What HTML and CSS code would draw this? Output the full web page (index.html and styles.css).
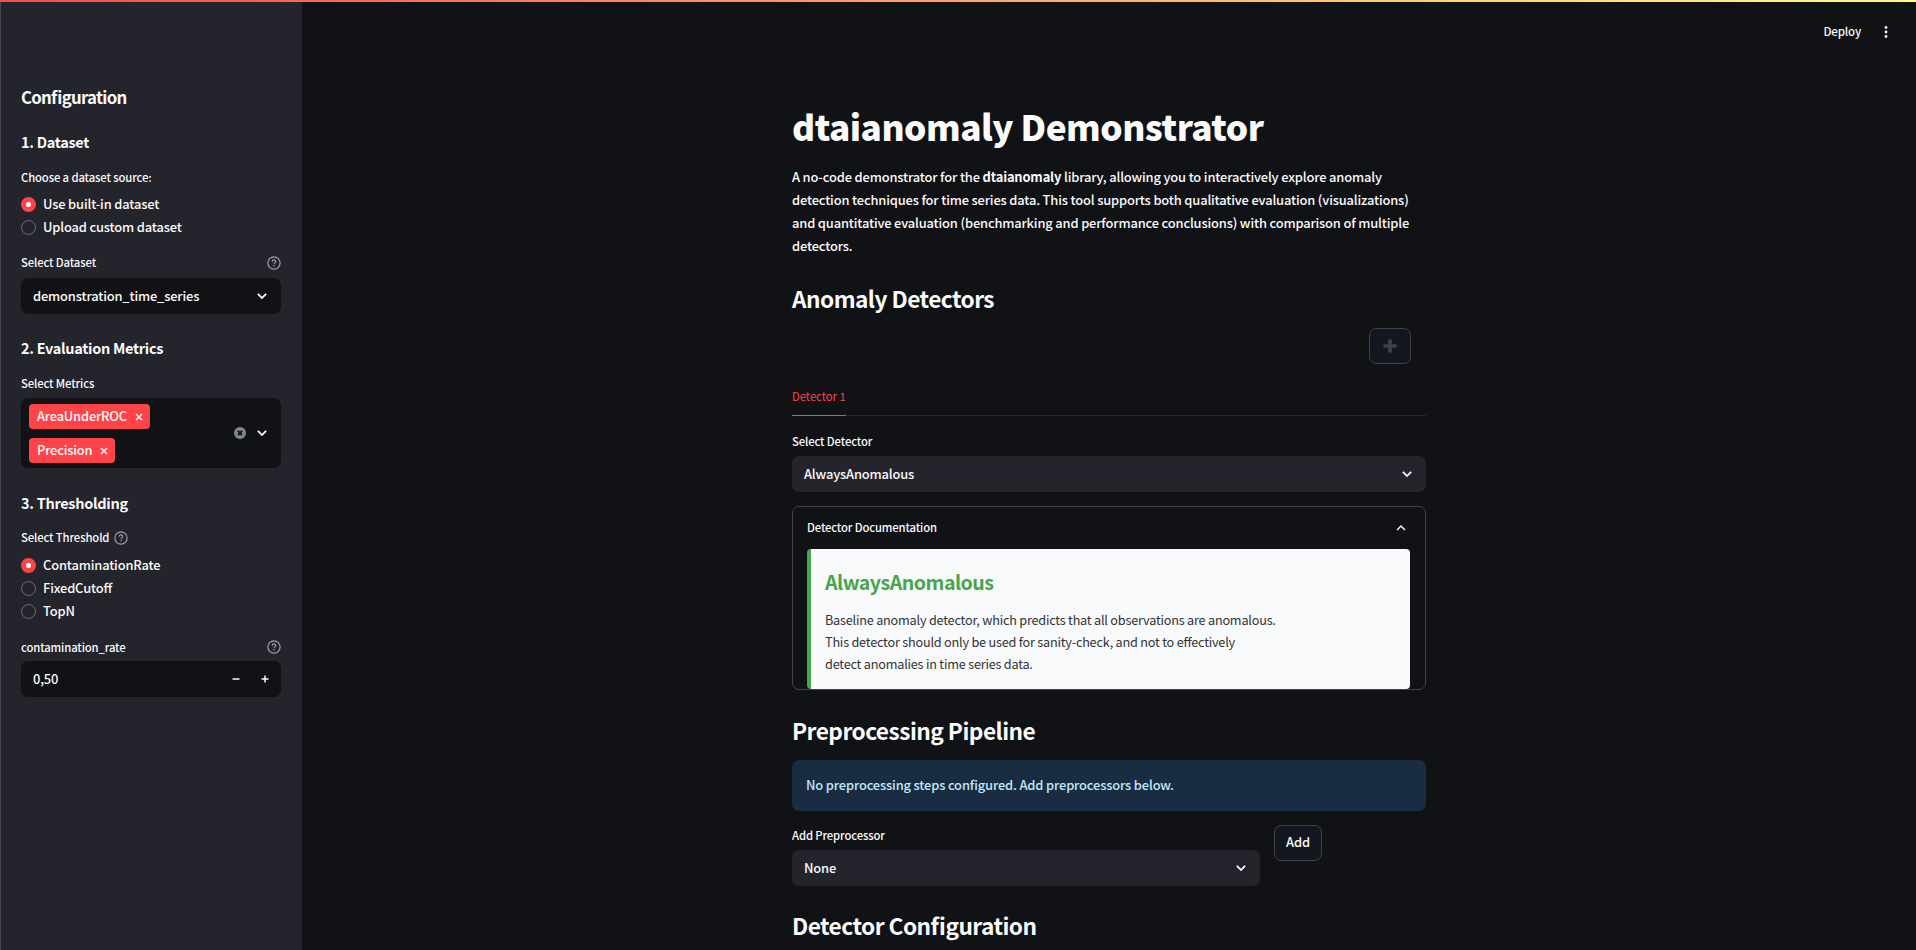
FILE: index.html
```html
<!DOCTYPE html>
<html lang="en">
<head>
<meta charset="utf-8">
<title>dtaianomaly Demonstrator</title>
<link rel="stylesheet" href="styles.css">
</head>
<body>
<svg class="defs" aria-hidden="true">
  <symbol id="down" viewBox="0 0 24 24"><path d="M16.6 8.6 12 13.2 7.4 8.6 6 10l6 6 6-6z" stroke="currentColor" stroke-width=".6"/></symbol>
  <symbol id="up" viewBox="0 0 24 24"><path d="M12 8l-6 6 1.4 1.4L12 10.8l4.6 4.6L18 14z"/></symbol>
  <symbol id="help" viewBox="0 0 24 24"><circle cx="12" cy="12" r="10.500" fill="none" stroke="currentColor" stroke-width="2"/><path d="M9 9.700a3 3 0 0 1 6 0c0 2-3 2.300-3 4.300" fill="none" stroke="currentColor" stroke-width="1.900"/><circle cx="12" cy="16.800" r="1.200"/></symbol>
  <symbol id="x" viewBox="0 0 8 8"><path d="M1 1l6 6M7 1L1 7" stroke="currentColor" stroke-width="1.500"/></symbol>
</svg>
<div class="stripe"></div>
<div class="app">
  <aside class="sidebar">
    <h2 class="side-title">Configuration</h2>
    <h3 class="side-heading">1. Dataset</h3>
    <div class="label raised">Choose a dataset source:</div>
    <div class="radios">
      <div class="radio"><span class="dot on"></span><span>Use built-in dataset</span></div>
      <div class="radio"><span class="dot"></span><span>Upload custom dataset</span></div>
    </div>
    <div class="label spread raised">Select Dataset<svg class="help"><use href="#help"/></svg></div>
    <div class="select dark"><span>demonstration_time_series</span><svg class="chev"><use href="#down"/></svg></div>
    <h3 class="side-heading after-field">2. Evaluation Metrics</h3>
    <div class="label">Select Metrics</div>
    <div class="multi">
      <div class="tags">
        <span class="tag">AreaUnderROC<svg class="x"><use href="#x"/></svg></span>
        <span class="tag">Precision<svg class="x"><use href="#x"/></svg></span>
      </div>
      <svg class="clear" viewBox="0 0 12 12"><circle cx="6" cy="6" r="6" fill="#808495"/><path d="M3.900 3.900l4.200 4.200M8.100 3.900L3.900 8.100" stroke="#111216" stroke-width="1.700"/></svg>
      <svg class="chev"><use href="#down"/></svg>
    </div>
    <h3 class="side-heading after-field lowered">3. Thresholding</h3>
    <div class="label threshold raised">Select Threshold<svg class="help"><use href="#help"/></svg></div>
    <div class="radios">
      <div class="radio"><span class="dot on"></span><span>ContaminationRate</span></div>
      <div class="radio"><span class="dot"></span><span>FixedCutoff</span></div>
      <div class="radio"><span class="dot"></span><span>TopN</span></div>
    </div>
    <div class="label spread rate">contamination_rate<svg class="help"><use href="#help"/></svg></div>
    <div class="number"><span>0,50</span>
      <svg class="step" viewBox="0 0 8 8"><path d="M.5 4h7" stroke="currentColor" stroke-width="1.500"/></svg>
      <svg class="step" viewBox="0 0 8 8"><path d="M.5 4h7M4 .5v7" stroke="currentColor" stroke-width="1.500"/></svg>
    </div>
  </aside>
  <div class="page">
    <header class="toolbar"><span>Deploy</span>
      <svg class="kebab" viewBox="0 0 4 12"><circle cx="2" cy="1.500" r="1.400"/><circle cx="2" cy="6" r="1.400"/><circle cx="2" cy="10.500" r="1.400"/></svg>
    </header>
    <main class="main">
      <h1>dtaianomaly Demonstrator</h1>
      <p class="intro">A no-code demonstrator for the <b>dtaianomaly</b> library, allowing you to interactively explore anomaly<br>detection techniques for time series data. This tool supports both qualitative evaluation (visualizations)<br>and quantitative evaluation (benchmarking and performance conclusions) with comparison of multiple<br>detectors.</p>
      <h2>Anomaly Detectors</h2>
      <div class="add-row"><button class="btn plus"><svg viewBox="0 0 14 14"><path d="M7 .5v13M.5 7h13" stroke="currentColor" stroke-width="3.600"/></svg></button></div>
      <div class="tabs"><div class="tab">Detector 1</div></div>
      <div class="label">Select Detector</div>
      <div class="select"><span>AlwaysAnomalous</span><svg class="chev"><use href="#down"/></svg></div>
      <section class="expander">
        <div class="summary"><span>Detector Documentation</span><svg class="chev"><use href="#up"/></svg></div>
        <div class="doc">
          <h3>AlwaysAnomalous</h3>
          <p>Baseline anomaly detector, which predicts that all observations are anomalous.<br>This detector should only be used for sanity-check, and not to effectively<br>detect anomalies in time series data.</p>
        </div>
      </section>
      <h2 class="pipeline">Preprocessing Pipeline</h2>
      <div class="info">No preprocessing steps configured. Add preprocessors below.</div>
      <div class="pre-row">
        <div class="pre-field">
          <div class="label">Add Preprocessor</div>
          <div class="select"><span>None</span><svg class="chev"><use href="#down"/></svg></div>
        </div>
        <button class="btn">Add</button>
      </div>
      <h2 class="config">Detector Configuration</h2>
    </main>
  </div>
</div>
</body>
</html>
```
FILE: styles.css
```css
* { box-sizing: border-box; }
body {
  margin: 0;
  height: 950px;
  overflow: hidden;
  background: #111216;
  color: #fafafa;
  font-family: "Noto Sans CJK SC", "Noto Sans", sans-serif;
  font-size: 12.9px;
  font-weight: 500;
  font-feature-settings: "liga" 1;
  letter-spacing: -0.16px;
  line-height: 23px;
}
h1, h2, h3, p { margin: 0; }
svg { display: block; flex: none; fill: currentColor; }
.defs { position: absolute; width: 0; height: 0; }
.stripe { height: 2px; background: linear-gradient(90deg, #ff4b4b, #fffd80); }
.app { display: flex; height: 948px; }

.sidebar {
  width: 302px;
  flex: none;
  padding: 80px 21px 0 20px;
  background: #24242c;
  border-left: 1px solid #45464c;
}
.side-title { height: 30px; font-size: 16.800px; font-weight: 700; line-height: 30px; letter-spacing: -0.72px; }
.side-heading { height: 24px; margin: 19px 0 9px; font-size: 14.500px; font-weight: 700; line-height: 22px; letter-spacing: -0.3px; }
.side-heading.after-field { margin: 23px 0 8px; }
.side-heading.lowered { line-height: 24px; }
.label { height: 29px; font-size: 11.300px; line-height: 28px; letter-spacing: -0.13px; }
.label.raised { line-height: 26px; }
.spread { display: flex; justify-content: space-between; margin-top: 10px; }
.threshold { display: flex; gap: 5px; height: 30px; margin-top: 9px; }
.rate { height: 28px; }
.help { width: 14px; height: 14px; margin-top: 7px; color: #a0a1a5; }
.radios { display: flex; flex-direction: column; }
.radio { display: flex; align-items: center; gap: 7px; height: 23px; }
.radio span:last-child, .select span, .number span { padding-bottom: 2px; }
.dot { width: 15px; height: 15px; border: 1px solid #6d6e74; border-radius: 50%; }
.dot.on { border: 5px solid #ff4449; background: #fff; }

.select, .number {
  display: flex;
  align-items: center;
  height: 36px;
  padding: 0 12px;
  border-radius: 7px;
  background: #24242c;
}
.select { justify-content: space-between; }
.select .chev { margin-bottom: 1px; }
.dark, .number { background: #111216; }
.chev { width: 18px; height: 18px; margin-right: -2px; }
.multi { display: flex; align-items: center; height: 70px; padding: 0 12px 0 8px; border-radius: 7px; background: #111216; }
.tags { display: flex; flex-direction: column; align-items: flex-start; gap: 9px; flex: 1; }
.tag { display: flex; align-items: center; gap: 8px; height: 25px; padding: 0 7px 2px 8px; border-radius: 4px; background: #ff4449; letter-spacing: -0.2px; }
.x { width: 8px; height: 8px; margin-top: 3px; }
.clear { width: 12px; height: 12px; margin-right: 7px; }
.number span { flex: 1; }
.step { width: 8px; height: 8px; margin-left: 21px; }
.step:nth-of-type(1) { margin-left: 0; }

.page { flex: 1; }
.toolbar { display: flex; align-items: center; justify-content: flex-end; gap: 23px; height: 60px; padding-right: 28px; font-size: 11.500px; }
.toolbar span { padding-bottom: 1px; }
.kebab { width: 4px; height: 12px; }
.main { width: 634px; margin-left: 490px; padding-top: 37px; }
h1 { height: 66px; font-size: 35.200px; font-weight: 900; line-height: 54px; letter-spacing: -0.5px; white-space: nowrap; }
.intro { white-space: nowrap; }
h2 { height: 34px; font-size: 22.700px; font-weight: 700; line-height: 34px; letter-spacing: -0.54px; }
.main h2 { margin-top: 25px; }
.add-row { display: flex; justify-content: flex-end; margin-top: 12px; padding-right: 15px; }
.btn {
  display: flex;
  align-items: center;
  justify-content: center;
  width: 48px;
  height: 36px;
  padding: 0 0 3px;
  border: 1px solid #414247;
  border-radius: 7px;
  background: #141720;
  color: inherit;
  font: inherit;
  letter-spacing: inherit;
}
.plus { width: 42px; padding: 0; color: #414247; }
.plus svg { width: 14px; height: 14px; }
.tabs { display: flex; height: 36px; margin: 16px 0 11px; border-bottom: 1px solid #27282d; }
.tab { height: 36px; border-bottom: 1px solid #ff4449; color: #ff4449; font-size: 11.300px; font-weight: 400; letter-spacing: -0.04px; line-height: 33px; }
.expander { height: 184px; margin-top: 14px; padding: 0 15px 0 14px; overflow: hidden; border: 1px solid #414247; border-radius: 7px; }
.summary { display: flex; align-items: center; justify-content: space-between; height: 42px; font-size: 11.300px; letter-spacing: -0.14px; }
.summary span { padding-bottom: 1px; }
.summary .chev { margin-right: 0; }
.doc { height: 140px; padding: 18px 14px; border-left: 4px solid #45a64a; border-radius: 4px; background: #f7f9fb; color: #333; font-size: 12.700px; font-weight: 400; line-height: 22px; letter-spacing: -0.22px; }
.doc h3 { height: 42px; color: #45a64a; font-size: 19.600px; font-weight: 700; line-height: 29px; letter-spacing: -0.53px; }
.main .pipeline { margin-top: 24px; }
.info { height: 51px; margin-top: 12px; padding: 0 14px; border-radius: 7px; background: #192c41; color: #c2e7fb; line-height: 49px; letter-spacing: -0.15px; }
.pre-row { display: flex; gap: 14px; margin-top: 14px; }
.pre-field { width: 468px; }
.pre-field .label { height: 25px; line-height: 21px; }
.main .config { margin-top: 23px; }
```
